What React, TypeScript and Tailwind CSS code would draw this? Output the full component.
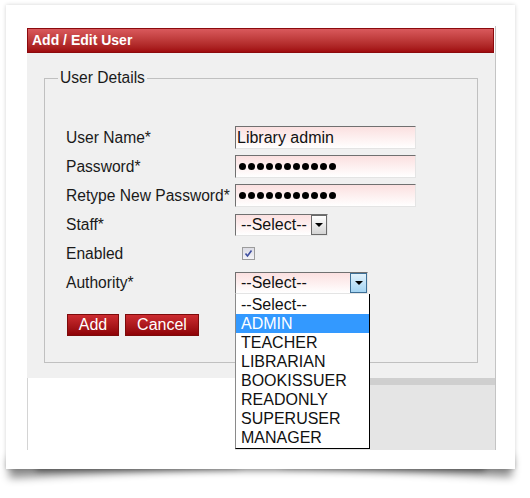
const roles = ["--Select--", "ADMIN", "TEACHER", "LIBRARIAN", "BOOKISSUER", "READONLY", "SUPERUSER", "MANAGER"];

function TextBox({ children }: { children: React.ReactNode }) {
  return (
    <div className="flex items-center w-[181px] h-[23px] border border-t-[#707070] border-l-[#707070] border-r-[#e4e4e4] border-b-[#e4e4e4] bg-linear-to-b from-[#fbe0e0] to-white pl-[1px] text-[16px] text-[#111]">
      {children}
    </div>
  );
}

function Dots() {
  return (
    <div className="flex items-center gap-[2px] pl-[2px]">
      {Array.from({ length: 11 }).map((_, i) => (
        <span key={i} className="w-[7px] h-[7px] rounded-full bg-black" />
      ))}
    </div>
  );
}

function Arrow() {
  return <span className="w-0 h-0 border-l-[4px] border-r-[4px] border-t-[4px] border-l-transparent border-r-transparent border-t-black" />;
}

function Row({ label, children }: { label: string; children?: React.ReactNode }) {
  return (
    <div className="flex items-center h-[29px]">
      <span className="w-[169px] text-[15.6px] text-[#1a1a1a]">{label}</span>
      {children}
    </div>
  );
}

export default function App() {
  return (
    <div className="w-[530px] h-[498px] bg-white pt-[5px] pl-[6px] font-['Liberation_Sans',Arial,sans-serif]">
      <div className="relative w-[509px] h-[464px]">
        {/* page curl shadow */}
        <div className="absolute left-[30px] right-[30px] bottom-[8px] h-[20px] shadow-[0_10px_7px_rgba(0,0,0,0.4)]" />
        <div className="absolute left-[2px] bottom-[10px] w-[230px] h-[20px] -rotate-[3deg] shadow-[0_13px_8px_rgba(0,0,0,0.45)]" />
        <div className="absolute right-[2px] bottom-[10px] w-[230px] h-[20px] rotate-[3deg] shadow-[0_12px_8px_rgba(0,0,0,0.45)]" />

        <div className="relative h-full bg-white shadow-[0_0_4px_rgba(0,0,0,0.18)] pt-[21px] pl-[21px]">
          <div className="w-[469px] h-[424px] border-r border-[#c4c4c4] flex flex-col">
            <div className="mt-[2px] mr-[1px] h-[25px] flex items-center pl-[4px] border border-[#8c0a0e] bg-linear-to-b from-[#d9595c] to-[#a00a0e] text-white text-[14px] font-bold">
              Add / Edit User
            </div>

            <div className="h-[325px] bg-[#f0f0f0] pt-[16px]">
              <fieldset className="ml-[17px] w-[434px] h-[294px] border border-[#c0c0c0]">
                <legend className="ml-[13px] px-[2px] text-[15.6px] leading-[18px] text-[#1a1a1a]">User Details</legend>
                <div className="pl-[21px] pt-[36px]">
                  <Row label="User Name*">
                    <TextBox>Library admin</TextBox>
                  </Row>
                  <Row label="Password*">
                    <TextBox><Dots /></TextBox>
                  </Row>
                  <Row label="Retype New Password*">
                    <TextBox><Dots /></TextBox>
                  </Row>
                  <Row label="Staff*">
                    <div className="flex w-[93px] h-[22px] border border-t-[#707070] border-l-[#707070] border-r-[#e4e4e4] border-b-[#e4e4e4] bg-linear-to-b from-[#fbe0e0] to-white">
                      <span className="flex-1 pl-[5px] text-[16px] leading-[20px] text-[#111]">--Select--</span>
                      <span className="flex items-center justify-center w-[16px] h-full border border-[#6a6a6a] bg-linear-to-b from-white to-[#d4d4d4]">
                        <Arrow />
                      </span>
                    </div>
                  </Row>
                  <Row label="Enabled">
                    <div className="ml-[7px] flex items-center justify-center w-[13px] h-[13px] border border-[#9c9c9c] bg-linear-to-b from-[#dcdce4] to-[#f4f4f8]">
                      <svg width="9" height="9" viewBox="0 0 9 9">
                        <path d="M1.5 4.5 L3.5 7 L7.5 1.5" fill="none" stroke="#3f4fa0" strokeWidth="1.6" />
                      </svg>
                    </div>
                  </Row>
                  <Row label="Authority*">
                    <div className="relative flex w-[133px] h-[22px] border border-t-[#707070] border-l-[#707070] border-r-[#e4e4e4] border-b-[#e4e4e4] bg-linear-to-b from-[#fbe0e0] to-white">
                      <span className="flex-1 pl-[5px] text-[16px] leading-[20px] text-[#111]">--Select--</span>
                      <span className="flex items-center justify-center w-[17px] h-full border border-[#3d6f96] bg-linear-to-b from-[#e2f2fc] to-[#a4d4f2]">
                        <Arrow />
                      </span>
                      <div className="absolute z-10 top-[21px] -left-[1px] w-[135px] h-[155px] bg-white border-l border-l-[#8a8a8a] border-r border-r-black border-b border-b-black pt-[1px]">
                        {roles.map((r) => (
                          <div
                            key={r}
                            className={r === "ADMIN" ? "h-[19px] leading-[19px] pl-[5px] text-[16px] bg-[#3399ff] text-white" : "h-[19px] leading-[19px] pl-[5px] text-[16px] text-[#111]"}
                          >
                            {r}
                          </div>
                        ))}
                      </div>
                    </div>
                  </Row>
                  <div className="mt-[17px] ml-[1px] flex gap-[6px]">
                    <button className="w-[52px] h-[22px] border border-[#7d0a0a] bg-linear-to-b from-[#cc2b30] to-[#8e0206] text-white text-[16px] leading-[20px]">Add</button>
                    <button className="w-[74px] h-[22px] border border-[#7d0a0a] bg-linear-to-b from-[#cc2b30] to-[#8e0206] text-white text-[16px] leading-[20px]">Cancel</button>
                  </div>
                </div>
              </fieldset>
            </div>

            <div className="flex-1 flex">
              <div className="w-[208px] bg-white border-l border-[#d4d4d4]" />
              <div className="flex-1 bg-[#e5e5e5] border-t-[7px] border-[#cfcfcf]" />
            </div>
          </div>
        </div>
      </div>
    </div>
  );
}
